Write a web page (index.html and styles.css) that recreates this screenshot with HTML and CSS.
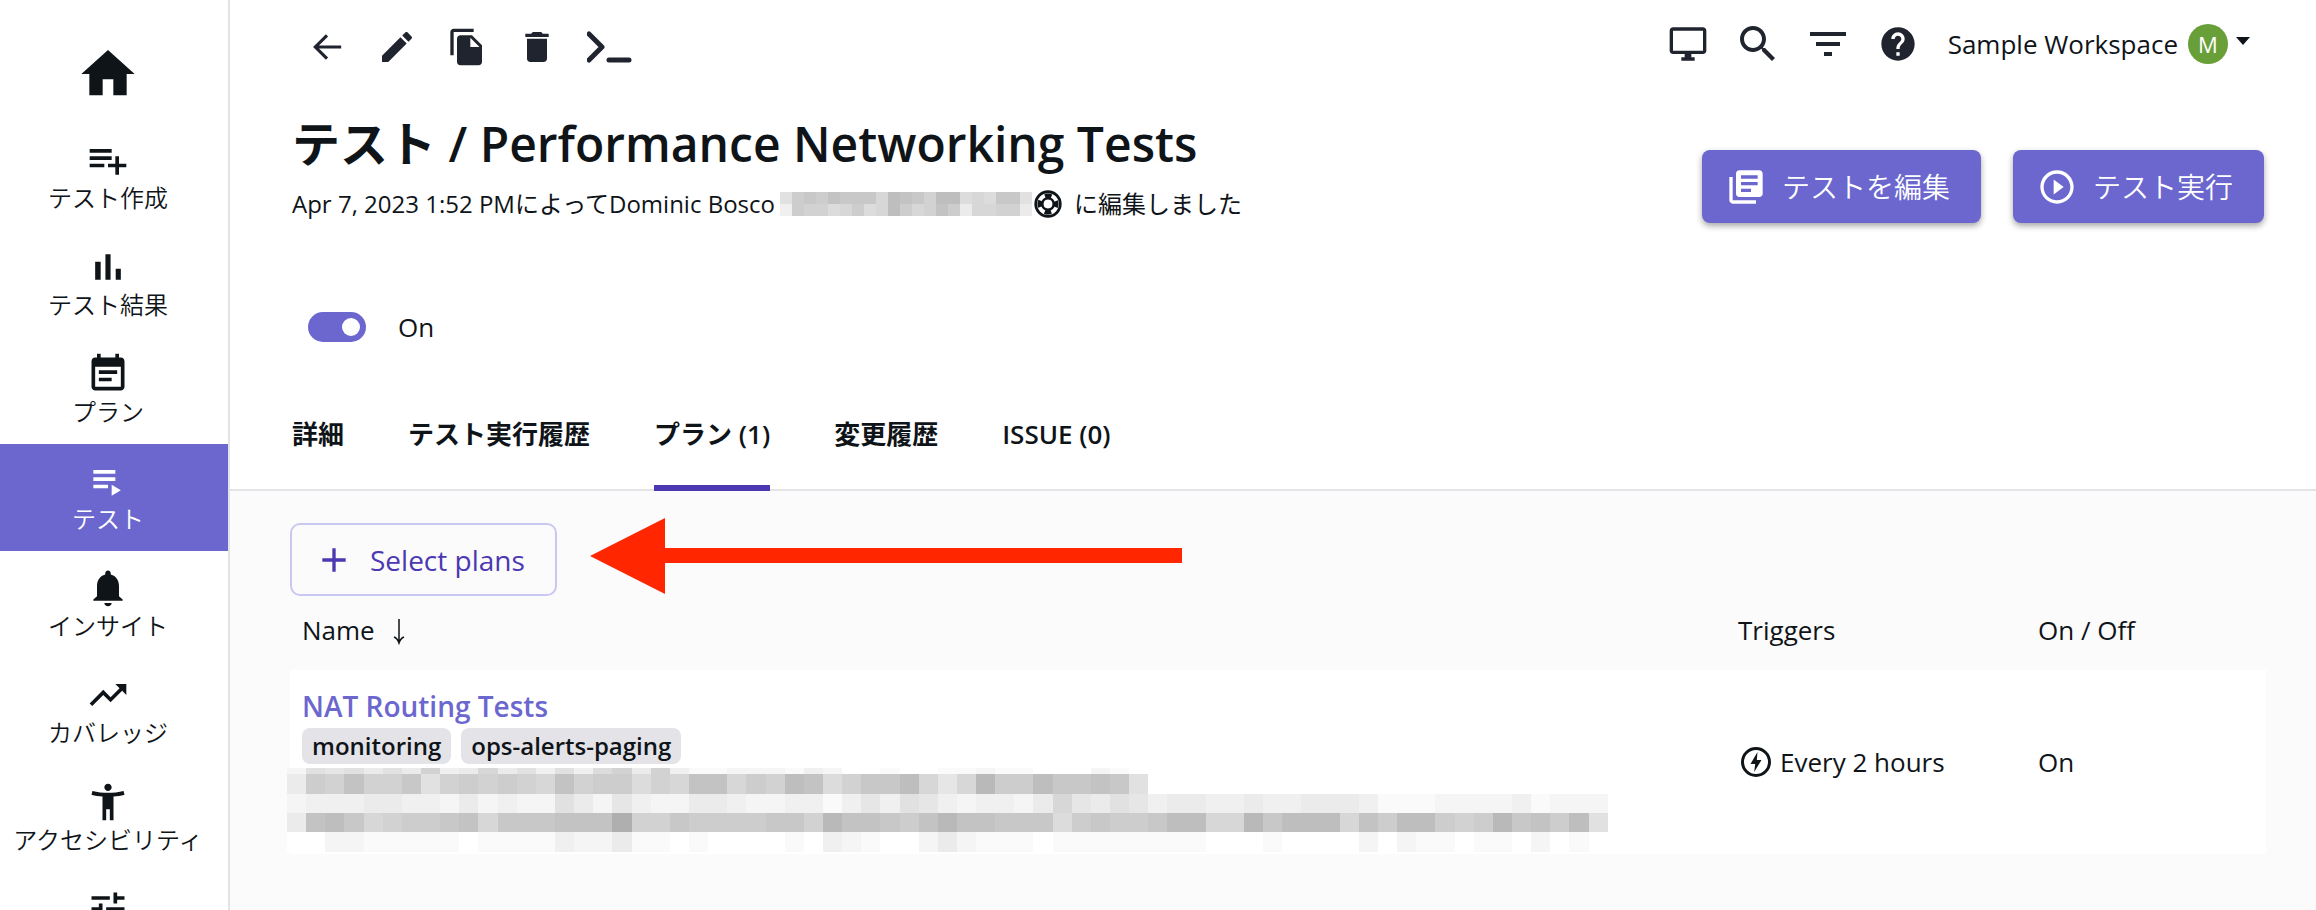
FILE: index.html
```html
<!DOCTYPE html>
<html lang="ja">

<head>
    <meta charset="UTF-8">
    <meta name="viewport" content="width=device-width, initial-scale=1.0">
    <title>テスト / Performance Networking Tests</title>
    <link rel="stylesheet" href="styles.css">
    <script src="mosaic.js" defer></script>
</head>

<body>
    <div class="app">
        <nav class="sidebar">
            <a class="home" href="#" aria-label="Home">
                <svg viewBox="0 0 24 24"><path d="M10 20v-6h4v6h5v-8h3L12 3 2 12h3v8z"/></svg>
            </a>
            <a class="nav-item" href="#">
                <svg viewBox="0 0 24 24"><path d="M14 10H2v2h12v-2zm0-4H2v2h12V6zm4 8v-4h-2v4h-4v2h4v4h2v-4h4v-2h-4zM2 16h8v-2H2v2z"/></svg>
                <span>テスト作成</span>
            </a>
            <a class="nav-item" href="#">
                <svg viewBox="0 0 24 24"><path d="M5 9.2h3V19H5zM10.6 5h2.8v14h-2.8zm5.6 8H19v6h-2.8z"/></svg>
                <span>テスト結果</span>
            </a>
            <a class="nav-item" href="#">
                <svg viewBox="0 0 24 24"><path d="M17 10H7v2h10v-2zm2-7h-1V1h-2v2H8V1H6v2H5c-1.11 0-1.99.9-1.99 2L3 19c0 1.1.89 2 2 2h14c1.1 0 2-.9 2-2V5c0-1.1-.9-2-2-2zm0 16H5V8h14v11zm-5-5H7v2h7v-2z"/></svg>
                <span>プラン</span>
            </a>
            <a class="nav-item nav-selected" href="#">
                <svg viewBox="0 0 24 24"><path d="M4 10h12v2H4zm0-4h12v2H4zm0 8h8v2H4zm10 0v6l5-3z"/></svg>
                <span>テスト</span>
            </a>
            <a class="nav-item" href="#">
                <svg viewBox="0 0 24 24"><path d="M12 22c1.1 0 2-.9 2-1.8h-4c0 .9.9 1.8 2 1.8zm6-6.5V11c0-3.1-1.6-5.6-4.5-6.3V4c0-.8-.7-1.5-1.5-1.5s-1.5.7-1.5 1.5v.7C7.6 5.4 6 7.9 6 11v5.5l-2 1.8V19h16v-.7l-2-1.8z"/></svg>
                <span>インサイト</span>
            </a>
            <a class="nav-item" href="#">
                <svg viewBox="0 0 24 24"><path d="M16 6l2.29 2.29-4.88 4.88-4-4L2 16.59 3.41 18l6-6 4 4 6.3-6.29L22 12V6z"/></svg>
                <span>カバレッジ</span>
            </a>
            <a class="nav-item" href="#">
                <svg viewBox="0 0 24 24"><path d="M20.5 6c-2.61.7-5.67 1-8.5 1s-5.89-.3-8.5-1L3 8c1.86.5 4 .83 6 1v13h2v-6h2v6h2V9c2-.17 4.14-.5 6-1l-.5-2zM12 6c1.1 0 2-.9 2-2s-.9-2-2-2-2 .9-2 2 .9 2 2 2z"/></svg>
                <span>アクセシビリティ</span>
            </a>
            <a class="nav-item" href="#" aria-label="Settings">
                <svg viewBox="0 0 24 24"><path d="M3 17v2h6v-2H3zM3 5v2h10V5H3zm10 16v-2h8v-2h-8v-2h-2v6h2zM7 9v2H3v2h4v2h2V9H7zm14 4v-2H11v2h10zm-6-4h2V7h4V5h-4V3h-2v6z"/></svg>
            </a>
        </nav>

        <main class="main">
            <div class="topbar">
                <div class="tools">
                    <button aria-label="Back">
                        <svg viewBox="0 0 24 24"><path d="M20.5 12H5M12 5l-7 7 7 7" fill="none" stroke="currentColor" stroke-width="1.9"/></svg>
                    </button>
                    <button aria-label="Edit">
                        <svg viewBox="0 0 24 24"><path d="M3 17.25V21h3.75L17.81 9.94l-3.75-3.75L3 17.25zM20.71 7.04c.39-.39.39-1.02 0-1.41l-2.34-2.34c-.39-.39-1.02-.39-1.41 0l-1.83 1.83 3.75 3.75 1.83-1.83z"/></svg>
                    </button>
                    <button aria-label="Copy">
                        <svg viewBox="0 0 24 24"><path d="M16 1H4c-1.1 0-2 .9-2 2v14h2V3h12V1zm-1 4l6 6v10c0 1.1-.9 2-2 2H7.99C6.89 23 6 22.1 6 21l.01-14c0-1.1.89-2 1.99-2h7zm-1 7h5.5L14 6.5V12z"/></svg>
                    </button>
                    <button aria-label="Delete">
                        <svg viewBox="0 0 24 24"><path d="M6 19c0 1.1.9 2 2 2h8c1.1 0 2-.9 2-2V7H6v12zM19 4h-3.5l-1-1h-5l-1 1H5v2h14V4z"/></svg>
                    </button>
                    <button aria-label="Terminal">
                        <svg class="terminal" viewBox="0 0 48 40"><path d="M2 7l13 13L2 33M22 33h20" fill="none" stroke="currentColor" stroke-width="5" stroke-linecap="round" stroke-linejoin="round"/></svg>
                    </button>
                </div>
                <div class="account">
                    <button aria-label="Display">
                        <svg viewBox="0 0 24 24"><path d="M21 2H3c-1.1 0-2 .9-2 2v12c0 1.1.9 2 2 2h7v2H8v2h8v-2h-2v-2h7c1.1 0 2-.9 2-2V4c0-1.1-.9-2-2-2zm0 14H3V4h18v12z"/></svg>
                    </button>
                    <button aria-label="Search">
                        <svg class="large" viewBox="0 0 24 24"><path d="M15.5 14h-.79l-.28-.27C15.41 12.59 16 11.11 16 9.5 16 5.91 13.09 3 9.5 3S3 5.91 3 9.5 5.91 16 9.5 16c1.61 0 3.09-.59 4.23-1.57l.27.28v.79l5 4.99L20.49 19l-4.99-5zm-6 0C7.01 14 5 11.99 5 9.5S7.01 5 9.5 5 14 7.01 14 9.5 11.99 14 9.5 14z"/></svg>
                    </button>
                    <button aria-label="Filter">
                        <svg class="large" viewBox="0 0 24 24"><path d="M10 18h4v-2h-4v2zM3 6v2h18V6H3zm3 7h12v-2H6v2z"/></svg>
                    </button>
                    <button aria-label="Help">
                        <svg viewBox="0 0 24 24"><path d="M12 2C6.48 2 2 6.48 2 12s4.48 10 10 10 10-4.48 10-10S17.52 2 12 2zm1 17h-2v-2h2v2zm2.07-7.75l-.9.92C13.45 12.9 13 13.5 13 15h-2v-.5c0-1.1.45-2.1 1.17-2.83l1.24-1.26c.37-.36.59-.86.59-1.41 0-1.1-.9-2-2-2s-2 .9-2 2H8c0-2.21 1.79-4 4-4s4 1.79 4 4c0 .88-.36 1.68-.93 2.25z"/></svg>
                    </button>
                    <button class="workspace">
                        <span>Sample Workspace</span>
                        <span class="avatar">M</span>
                        <svg class="caret" viewBox="0 0 14 8"><path d="M0 0h14L7 8z"/></svg>
                    </button>
                </div>
            </div>

            <header class="header">
                <div class="heading">
                    <h1>テスト / Performance Networking Tests</h1>
                    <p class="edited">
                        <span>Apr 7, 2023 1:52 PMによってDominic Bosco</span>
                        <span class="mosaic mosaic-user" data-rows="6abacbbb8dcb9dd787bb6 3a9978a78da89ca488994"></span>
                        <svg viewBox="0 0 24 24">
                            <circle cx="12" cy="12" r="10.5" fill="none" stroke="currentColor" stroke-width="2.4"/>
                            <circle cx="12" cy="12" r="6.5" fill="none" stroke="currentColor" stroke-width="5" stroke-dasharray="5.1 5.11" stroke-dashoffset="2.55"/>
                            <circle cx="12" cy="12" r="5" fill="none" stroke="currentColor" stroke-width="2"/>
                        </svg>
                        <span>に編集しました</span>
                    </p>
                </div>
                <div class="actions">
                    <button class="primary">
                        <svg viewBox="0 0 24 24"><path d="M4 6H2v14c0 1.1.9 2 2 2h14v-2H4V6zm16-4H8c-1.1 0-2 .9-2 2v12c0 1.1.9 2 2 2h12c1.1 0 2-.9 2-2V4c0-1.1-.9-2-2-2zm-1 9H9V9h10v2zm-4 4H9v-2h6v2zm4-8H9V5h10v2z"/></svg>
                        テストを編集
                    </button>
                    <button class="primary">
                        <svg viewBox="0 0 24 24"><path d="M10 16.5l6-4.5-6-4.5v9zM12 2C6.48 2 2 6.48 2 12s4.48 10 10 10 10-4.48 10-10S17.52 2 12 2zm0 18c-4.41 0-8-3.59-8-8s3.59-8 8-8 8 3.59 8 8-3.59 8-8 8z"/></svg>
                        テスト実行
                    </button>
                </div>
            </header>

            <label class="toggle">
                <input type="checkbox" checked>
                <span>On</span>
            </label>

            <div class="tabs" role="tablist">
                <button role="tab">詳細</button>
                <button role="tab">テスト実行履歴</button>
                <button role="tab" class="tab-selected" aria-selected="true">プラン (1)</button>
                <button role="tab">変更履歴</button>
                <button role="tab">ISSUE (0)</button>
            </div>

            <section class="plans">
                <button class="select-plans">
                    <svg viewBox="0 0 24 24"><path d="M19 13h-6v6h-2v-6H5v-2h6V5h2v6h6v2z"/></svg>
                    Select plans
                </button>
                <svg class="pointer" viewBox="0 0 592 76"><path d="M0 38L75 0v30h517v15H75v31z"/></svg>
                <table>
                    <thead>
                        <tr>
                            <th>
                                <span class="sort">Name
                                    <svg viewBox="0 0 12 26"><path d="M6 0v24M1 18c3 1 4 3 5 6 1-3 2-5 5-6" fill="none" stroke="currentColor" stroke-width="1.5"/></svg>
                                </span>
                            </th>
                            <th class="col-triggers">Triggers</th>
                            <th class="col-state">On / Off</th>
                        </tr>
                    </thead>
                    <tbody>
                        <tr>
                            <td class="plan">
                                <a href="#">NAT Routing Tests</a>
                                <div class="tags">
                                    <span>monitoring</span>
                                    <span>ops-alerts-paging</span>
                                </div>
                                <div class="mosaic mosaic-plan" data-rows="265646493484636379493112221320010011211000210 4a9c99b69a9a98c9aa798cc8a9dc79bbd858eaadbbcb6 233344332423226425322443223313536532332485465344334334443111222231222 4cdb89aabc8bbbcccg99baaaabb9eccbaceccbbb7abaabdd88ebddd8cadda9aebcad6 002211111011113224110100001032100242111011111111000100002021101102010"></div>
                            </td>
                            <td>
                                <span class="trigger">
                                    <svg viewBox="0 0 32 32"><circle cx="16" cy="16" r="13.5" fill="none" stroke="currentColor" stroke-width="3"/><path d="M17.5 6L10.5 18h4.7l-1 8 7.3-12h-4.7z"/></svg>
                                    Every 2 hours
                                </span>
                            </td>
                            <td>On</td>
                        </tr>
                    </tbody>
                </table>
            </section>
        </main>
    </div>
</body>

</html>
```
FILE: styles.css
```css
* {
    box-sizing: border-box;
}

html,
body {
    height: 100%;
    margin: 0;
    overflow: hidden;
}

body {
    background: #fff;
    color: #0f1419;
    font-family: "Open Sans", "Noto Sans CJK JP", sans-serif;
    font-size: 26px;
    line-height: 36px;
}

svg {
    display: block;
    flex: none;
    width: 40px;
    height: 40px;
    fill: currentColor;
}

button {
    display: flex;
    align-items: center;
    justify-content: center;
    margin: 0;
    padding: 0;
    border: 0;
    background: none;
    color: inherit;
    font: inherit;
    white-space: nowrap;
    cursor: pointer;
}

a {
    color: inherit;
    text-decoration: none;
}

.app {
    display: flex;
    height: 100%;
}

/* sidebar */

.sidebar {
    flex: none;
    width: 230px;
    border-right: 2px solid #e3e3e8;
    overflow: hidden;
    font-size: 24px;
    font-weight: 350;
    line-height: 32px;
}

.home {
    display: flex;
    justify-content: center;
    height: 123px;
    padding: 42px 12px 0 0;
}

.home svg {
    width: 64px;
    height: 64px;
}

.nav-item {
    display: flex;
    flex-direction: column;
    align-items: center;
    height: 107px;
    padding: 15px 12px 0 0;
    white-space: nowrap;
}

.nav-item svg {
    width: 44px;
    height: 44px;
}

.nav-selected {
    background: #6b67cf;
    color: #fff;
}

/* top bar */

.main {
    display: flex;
    flex: 1;
    flex-direction: column;
    min-width: 0;
}

.topbar {
    display: flex;
    justify-content: space-between;
    padding: 20px 66px 0 77px;
}

.tools,
.account {
    display: flex;
    align-items: center;
    color: #20242e;
}

.tools {
    gap: 30px;
    height: 54px;
}

.tools .terminal {
    width: 48px;
}

.account {
    gap: 22px;
    height: 48px;
}

.account button {
    min-width: 48px;
}

.account .large {
    width: 48px;
    height: 48px;
}

.account .workspace {
    gap: 8px;
    padding-left: 4px;
    color: #0f1419;
}

.avatar {
    width: 40px;
    height: 40px;
    margin-left: 2px;
    border-radius: 50%;
    background: #689f38;
    color: #fff;
    font-size: 22px;
    line-height: 40px;
    text-align: center;
}

.workspace .caret {
    width: 14px;
    height: 8px;
    margin-bottom: 6px;
}

/* page header */

.header {
    display: flex;
    justify-content: space-between;
    padding: 37px 52px 0 62px;
}

h1 {
    margin: 0;
    font-size: 48px;
    font-weight: 600;
    line-height: 66px;
}

.edited {
    display: flex;
    align-items: center;
    margin: 9px 0 0;
    font-size: 24px;
    line-height: 36px;
    white-space: nowrap;
}

.edited svg {
    width: 28px;
    height: 28px;
    margin-right: 12px;
}

.actions {
    display: flex;
    gap: 32px;
    padding-top: 39px;
}

.primary {
    gap: 16px;
    height: 73px;
    padding: 0 31px 0 24px;
    border-radius: 8px;
    background: #6b67cf;
    box-shadow: 0 3px 6px rgba(0, 0, 0, 0.35);
    color: #fff;
    font-size: 28px;
    font-weight: 350;
}

.toggle {
    display: flex;
    align-items: center;
    gap: 32px;
    align-self: flex-start;
    margin: 86px 0 0 78px;
}

.toggle input {
    display: flex;
    justify-content: flex-end;
    align-items: center;
    width: 58px;
    height: 30px;
    margin: 0;
    padding: 6px;
    border-radius: 15px;
    background: #6b67cf;
    appearance: none;
}

.toggle input::before {
    content: "";
    width: 18px;
    height: 18px;
    border-radius: 50%;
    background: #fff;
}

/* tabs */

.tabs {
    display: flex;
    gap: 64px;
    height: 108px;
    margin-top: 38px;
    padding-left: 62px;
    border-bottom: 2px solid #e3e3e8;
    font-weight: 600;
}

.tabs button {
    height: 108px;
    border-bottom: 6px solid transparent;
}

.tabs .tab-selected {
    border-color: #4b38b3;
}

/* plans */

.plans {
    position: relative;
    flex: 1;
    padding: 32px 50px 0 60px;
    background: #fbfbfb;
}

.select-plans {
    gap: 16px;
    height: 73px;
    padding: 0 30px 0 22px;
    border: 2px solid #c9c8f0;
    border-radius: 10px;
    color: #4b38b3;
    font-size: 28px;
}

.pointer {
    position: absolute;
    top: 27px;
    left: 360px;
    width: 592px;
    height: 76px;
    fill: #ff2600;
}

table {
    width: 100%;
    border-collapse: collapse;
    table-layout: fixed;
}

th,
td {
    padding: 0 12px;
    font-weight: 400;
    text-align: left;
}

th {
    height: 74px;
    padding-bottom: 6px;
}

.col-triggers {
    width: 300px;
}

.col-state {
    width: 240px;
}

.sort,
.trigger {
    display: flex;
    align-items: center;
}

.sort {
    gap: 18px;
}

.sort svg {
    width: 12px;
    height: 26px;
    margin-top: 4px;
}

.trigger {
    gap: 8px;
    padding-left: 2px;
}

.trigger svg {
    width: 32px;
    height: 32px;
}

tbody tr {
    height: 184px;
    background: #fff;
}

.plan {
    padding-top: 15px;
    vertical-align: top;
}

.plan a {
    display: block;
    color: #6b67cf;
    font-size: 28px;
    font-weight: 600;
    line-height: 42px;
}

.tags {
    display: flex;
    gap: 10px;
    margin-top: 1px;
    font-size: 24px;
    font-weight: 600;
    line-height: 36px;
}

.tags span {
    padding: 0 10px;
    border-radius: 8px;
    background: #e3e3e8;
}

/* redacted text */

.mosaic i {
    display: block;
    flex: none;
}

.mosaic-row {
    display: flex;
}

.mosaic-user {
    margin: 0 2px 0 5px;
}

.mosaic-user i {
    width: 12px;
    height: 12px;
}

.mosaic-plan {
    display: grid;
    grid-template-rows: 6px 20px 19px 19px 20px;
    width: 1321px;
    margin: 4px 0 0 -15px;
}

.mosaic-plan i {
    width: calc(100% / 69);
}
```
FILE: mosaic.js
```js
// each character is one block, 0 is white and every step is 5 darker
document.querySelectorAll(".mosaic").forEach((mosaic) => {
    mosaic.dataset.rows.split(" ").forEach((row) => {
        let line = document.createElement("span")
        line.className = "mosaic-row"

        for (let block of row) {
            let cell = document.createElement("i")
            let shade = 255 - parseInt(block, 36) * 5
            cell.style.background = `rgb(${shade}, ${shade}, ${shade})`
            line.append(cell)
        }

        mosaic.append(line)
    })
})
```
